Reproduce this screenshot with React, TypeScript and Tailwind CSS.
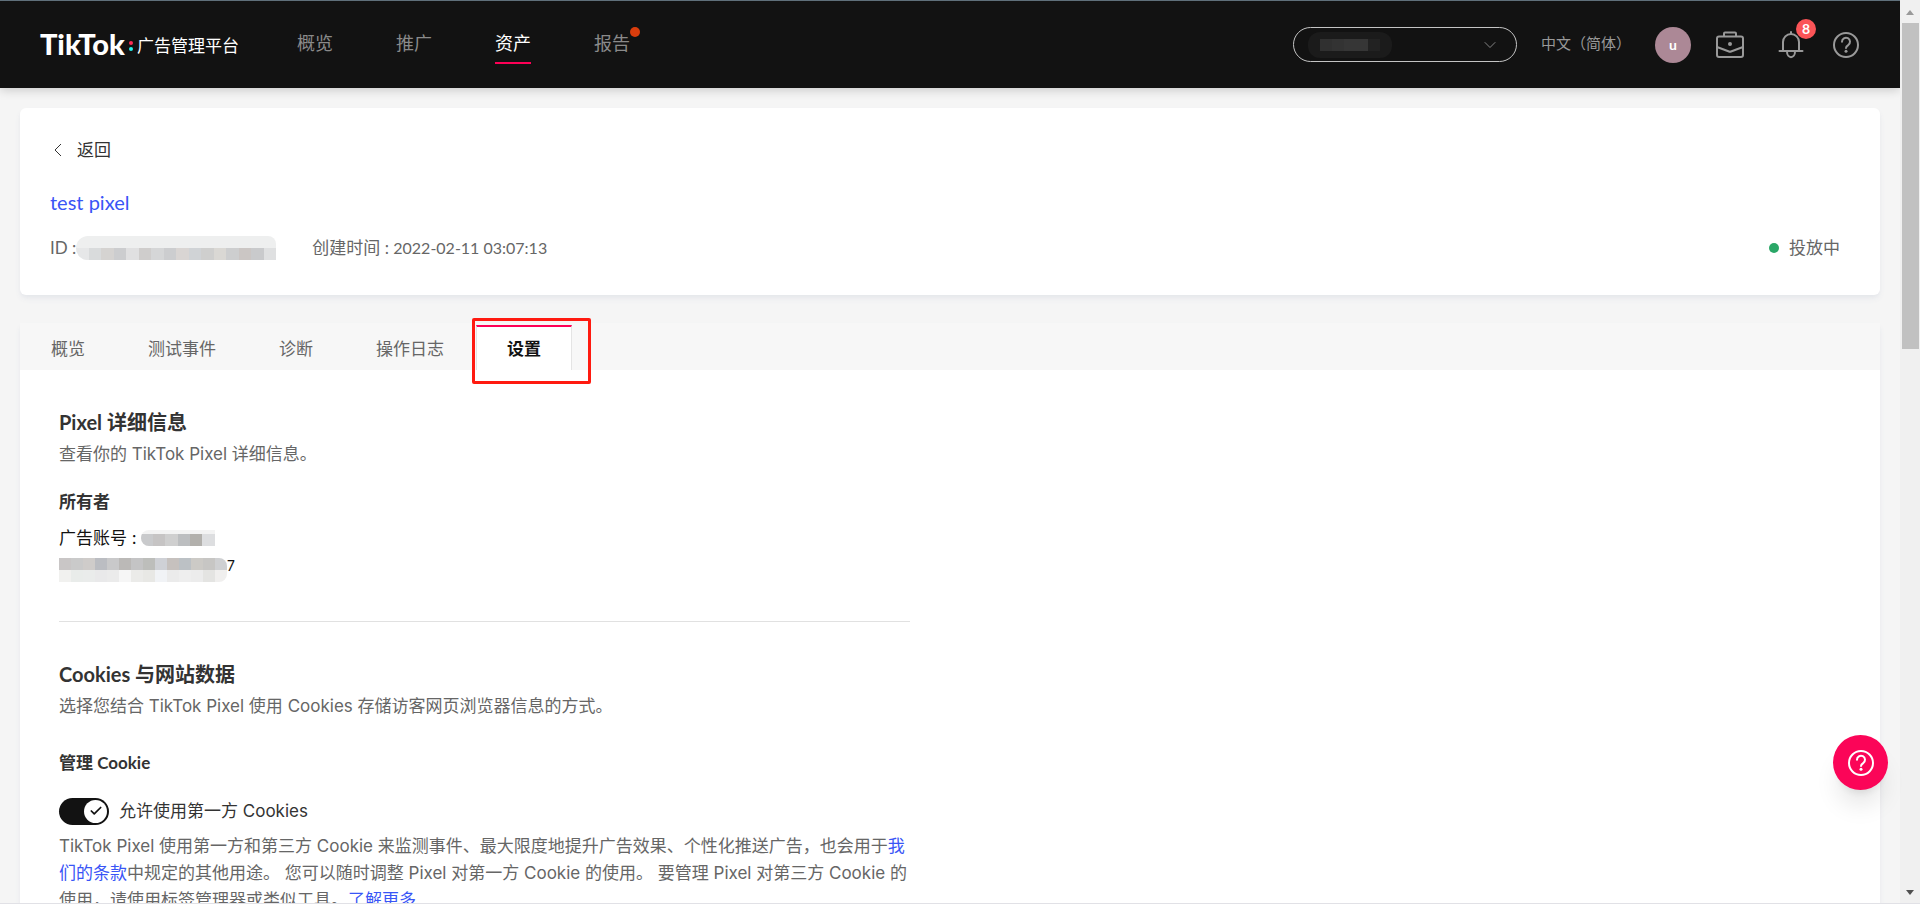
import { Check, ChevronDown } from 'lucide-react';

const navItems = [
  { label: '概览' },
  { label: '推广' },
  { label: '资产', active: true },
  { label: '报告', dot: true },
];

const tabs = ['概览', '测试事件', '诊断', '操作日志'];

const idShades = [
  'bg-[#e6e7e8]', 'bg-[#d9dbdc]', 'bg-[#d5d3d1]', 'bg-[#cccdcf]', 'bg-[#e0e0e1]', 'bg-[#cfcdcc]', 'bg-[#d5d6d7]', 'bg-[#cccdcf]', 'bg-[#d9d5d3]',
  'bg-[#d0d3d6]', 'bg-[#cfcfce]', 'bg-[#dad8d4]', 'bg-[#cdcecf]', 'bg-[#cbc6c4]', 'bg-[#c9cacc]', 'bg-[#dfe0e1]',
];
const nameShades = ['bg-[#c9cacc]', 'bg-[#c6c4c4]', 'bg-[#cfcfcf]', 'bg-[#bcbec0]', 'bg-[#b2b0ac]', 'bg-[#dddee0]'];
const accountShades = [
  'bg-[#c9c6c6]', 'bg-[#cacaca]', 'bg-[#cfccca]', 'bg-[#bbbdc2]', 'bg-[#c9c9ca]', 'bg-[#bbb9b7]', 'bg-[#c4c4c5]',
  'bg-[#bdbebb]', 'bg-[#cfd1d6]', 'bg-[#c6c1be]', 'bg-[#bcc1c5]', 'bg-[#cccac6]', 'bg-[#c7c6c4]', 'bg-[#cfd0d2]',
];
const accountLightShades = [
  'bg-[#f1f1ef]', 'bg-[#e9ecea]', 'bg-[#eaeceb]', 'bg-[#e9e9ea]', 'bg-[#ebebeb]', 'bg-[#f6f6f6]', 'bg-[#ebebe9]',
  'bg-[#e8e8e5]', 'bg-[#f1f3f6]', 'bg-[#ebebeb]', 'bg-[#eeeeee]', 'bg-[#ececec]', 'bg-[#e4e4e2]', 'bg-[#f0efee]',
];

function Mosaic({ shades }: { shades: string[] }) {
  return (
    <span className="flex">
      {shades.map((shade, i) => (
        <span key={i} className={`h-3 flex-1 ${shade}`} />
      ))}
    </span>
  );
}

function BriefcaseIcon() {
  return (
    <svg width="30" height="30" viewBox="0 0 30 30" fill="none" stroke="currentColor" strokeWidth="2" strokeLinejoin="round">
      <rect x="2" y="6.5" width="26" height="20.5" rx="2" />
      <path d="M9 6V3.5a1 1 0 0 1 1-1h10a1 1 0 0 1 1 1V6M2 17l12 4.5q1 .5 2 0L28 17" />
      <circle cx="15" cy="14" r="2" fill="currentColor" stroke="none" />
    </svg>
  );
}

function BellIcon() {
  return (
    <svg width="28" height="30" viewBox="0 0 28 30" fill="none" stroke="currentColor" strokeWidth="2" strokeLinecap="round">
      <path d="M14 2v1.5M6 21v-9a8 8 0 0 1 16 0v9M2.5 21h23M10 21.5c0 7.5 8 7.5 8 0" />
    </svg>
  );
}

function HelpIcon({ strokeWidth }: { strokeWidth: number }) {
  return (
    <svg width="28" height="28" viewBox="0 0 28 28" fill="none" stroke="currentColor" strokeWidth={strokeWidth} strokeLinecap="round">
      <circle cx="14" cy="14" r="12" />
      <path d="M10 10.8a4 4 0 1 1 6.2 3.3c-1.5 1-2.2 1.6-2.2 3" />
      <circle cx="14" cy="20.2" r="1.5" fill="currentColor" stroke="none" />
    </svg>
  );
}

function Header() {
  return (
    <header className="flex h-[88px] items-center justify-between border-t border-[#5f6f7a] bg-[#121212] pr-10 pl-10 shadow-[0_2px_10px_rgba(0,0,0,0.18)]">
      <div className="flex items-center">
        <a href="#" className="mb-0.5 flex items-center text-white">
          <span className="text-[29px] leading-8 font-black">TikTok</span>
          <span className="mx-1 mt-1 flex flex-col gap-0.5">
            <span className="size-1 rounded-full bg-[#fe2c55]" />
            <span className="size-1 rounded-full bg-[#25f4ee]" />
          </span>
          <span className="mt-1 text-[17px] leading-8">广告管理平台</span>
        </a>
        <nav className="mt-1.5 ml-[58px] flex gap-[63px]">
          {navItems.map((item) => (
            <a
              key={item.label}
              href="#"
              className={`relative border-b-2 pb-[7px] text-lg leading-6 ${
                item.active ? 'border-[#fe0056] text-white' : 'border-transparent text-[#8a8a8a]'
              }`}
            >
              {item.label}
              {item.dot && <span className="absolute -top-1 -right-2.5 size-2.5 rounded-full bg-[#d93d0d]" />}
            </a>
          ))}
        </nav>
      </div>
      <div className="flex items-center text-[#999]">
        <button aria-label="账户" className="flex h-[35px] w-[224px] items-center justify-between rounded-full border border-[#c4c4c4] pr-4 pl-3.5">
          <span className="flex h-[26px] items-center rounded-xl bg-[#1b1b1b] px-3">
            <span className="h-3 w-3 bg-[#303030]" />
            <span className="h-3 w-3 bg-[#333333]" />
            <span className="h-3 w-6 bg-[#363636]" />
            <span className="h-3 w-3 bg-[#222222]" />
          </span>
          <ChevronDown size={20} strokeWidth={1} />
        </button>
        <button className="mb-1 ml-6 text-[15px] leading-6">中文（简体）</button>
        <button className="ml-6 size-9 rounded-full bg-[#ac8896] text-sm font-bold text-white">u</button>
        <button aria-label="商务中心" className="ml-6">
          <BriefcaseIcon />
        </button>
        <button aria-label="通知" className="relative ml-8">
          <BellIcon />
          <span className="absolute -top-[11px] -right-[11px] flex size-5 items-center justify-center rounded-full bg-[#fb5457] text-sm font-bold text-white">
            8
          </span>
        </button>
        <button aria-label="帮助" className="ml-[27px]">
          <HelpIcon strokeWidth={2} />
        </button>
      </div>
    </header>
  );
}

function PixelCard() {
  return (
    <section className="rounded-md bg-white px-[30px] pt-7 pb-[33px] shadow-md shadow-gray-200">
      <button className="flex items-center gap-3 text-[17px] leading-7 text-[#333]">
        <svg width="15" height="14" viewBox="0 0 15 14" fill="none" stroke="currentColor">
          <path d="M11 1L5 7l6 6" />
        </svg>
        返回
      </button>
      <h1 className="mt-6 text-xl leading-7 text-[#3955f6]">test pixel</h1>
      <div className="mt-[18px] flex items-center text-[17px] leading-7 text-[#666]">
        <span>ID :</span>
        <span className="w-[200px] overflow-hidden rounded-l-xl rounded-tr-lg bg-[#eeefef] pt-3">
          <Mosaic shades={idShades} />
        </span>
        <span className="ml-9">
          创建时间 : <span className="text-base">2022-02-11 03:07:13</span>
        </span>
        <span className="mr-2.5 ml-auto flex items-center gap-2.5">
          <span className="size-2.5 rounded-full bg-[#2aa767]" />
          投放中
        </span>
      </div>
    </section>
  );
}

function Tabs() {
  return (
    <div role="tablist" className="flex h-[47px] gap-px bg-[#f7f7f7] text-[17px] leading-6 text-[#666]">
      {tabs.map((tab) => (
        <button key={tab} role="tab" aria-selected="false" className="px-[31px] pt-1">
          {tab}
        </button>
      ))}
      <div className="relative">
        <button
          role="tab"
          aria-selected="true"
          className="mt-0.5 h-[45px] border-x border-t-2 border-x-[#e4e4e4] border-t-[#fe0056] bg-white px-[30px] font-bold text-[#121212]"
        >
          设置
        </button>
        <span className="pointer-events-none absolute -top-[5px] -left-1 h-[66px] w-[119px] rounded-xs border-3 border-[#ff1a10]" />
      </div>
    </div>
  );
}

function Settings() {
  return (
    <div className="max-w-[929px] px-[39px] pt-9 font-[Inter,'Noto_Sans_CJK_SC',sans-serif] text-[17px] text-[#666]">
      <section className="border-b border-[#e1e1e1] pb-[39px]">
        <h2 className="font-[Lato,'Noto_Sans_CJK_SC',sans-serif] text-xl leading-8 font-bold text-[#333]">Pixel 详细信息</h2>
        <p className="leading-8">查看你的 TikTok Pixel 详细信息。</p>
        <h3 className="mt-4 leading-8 font-bold text-[#333]">所有者</h3>
        <div className="mt-1 flex items-center leading-8 text-[#121212]">
          广告账号 :
          <span className="ml-1 w-[74px] overflow-hidden rounded-l-lg bg-[#f3f3f3] pt-1">
            <Mosaic shades={nameShades} />
          </span>
        </div>
        <div className="mt-1 flex items-start leading-4 text-[#121212]">
          <span className="w-[168px] overflow-hidden rounded-r-lg">
            <Mosaic shades={accountShades} />
            <Mosaic shades={accountLightShades} />
          </span>
          <span className="text-sm leading-4">7</span>
        </div>
      </section>
      <section className="pt-9">
        <h2 className="font-[Lato,'Noto_Sans_CJK_SC',sans-serif] text-xl leading-8 font-bold text-[#333]">Cookies 与网站数据</h2>
        <p className="leading-8">选择您结合 TikTok Pixel 使用 Cookies 存储访客网页浏览器信息的方式。</p>
        <h3 className="mt-[25px] font-[Lato,'Noto_Sans_CJK_SC',sans-serif] leading-8 font-bold text-[#333]">管理 Cookie</h3>
        <label className="mt-4 flex items-center gap-2.5 leading-8 text-[#333]">
          <span className="relative flex">
            <input type="checkbox" role="switch" defaultChecked className="h-[27px] w-[50px] appearance-none rounded-full bg-[#121212]" />
            <span className="pointer-events-none absolute top-0.5 right-0.5 flex size-[23px] items-center justify-center rounded-full bg-white text-[#121212]">
              <Check size={14} strokeWidth={3} />
            </span>
          </span>
          允许使用第一方 Cookies
        </label>
        <p className="mt-1.5 leading-[27px]">
          TikTok Pixel 使用第一方和第三方 Cookie 来监测事件、最大限度地提升广告效果、个性化推送广告，也会用于
          <a href="#" className="text-[#3955f6]">我们的条款</a>
          中规定的其他用途。 您可以随时调整 Pixel 对第一方 Cookie 的使用。 要管理 Pixel 对第三方 Cookie 的使用，请使用标签管理器或类似工具。
          <a href="#" className="text-[#3955f6]">了解更多</a>
        </p>
      </section>
    </div>
  );
}

export default function App() {
  return (
    <div className="flex h-screen overflow-hidden border-b border-[#e1e1e6] bg-[#f5f5f5] font-[Lato,'Noto_Sans_CJK_SC',sans-serif]">
      <div className="min-w-0 flex-1">
        <Header />
        <main className="px-5 pt-5">
          <PixelCard />
          <div className="mt-7 bg-white shadow-md shadow-gray-200">
            <Tabs />
            <Settings />
          </div>
        </main>
      </div>
      {/* Scrollbar */}
      <div className="flex w-5 flex-col items-center bg-[#f0f0f0]">
        <span className="mt-2.5 h-0 border-x-4 border-b-5 border-x-transparent border-b-[#999]" />
        <span className="mt-2 h-[326px] w-[17px] bg-[#c1c1c1]" />
        <span className="mt-auto mb-2 h-0 border-x-4 border-t-5 border-x-transparent border-t-[#505050]" />
      </div>
      <button
        aria-label="帮助中心"
        className="fixed right-8 bottom-[114px] flex size-[55px] items-center justify-center rounded-full bg-[#fb0558] text-white shadow-xl"
      >
        <HelpIcon strokeWidth={2} />
      </button>
    </div>
  );
}
